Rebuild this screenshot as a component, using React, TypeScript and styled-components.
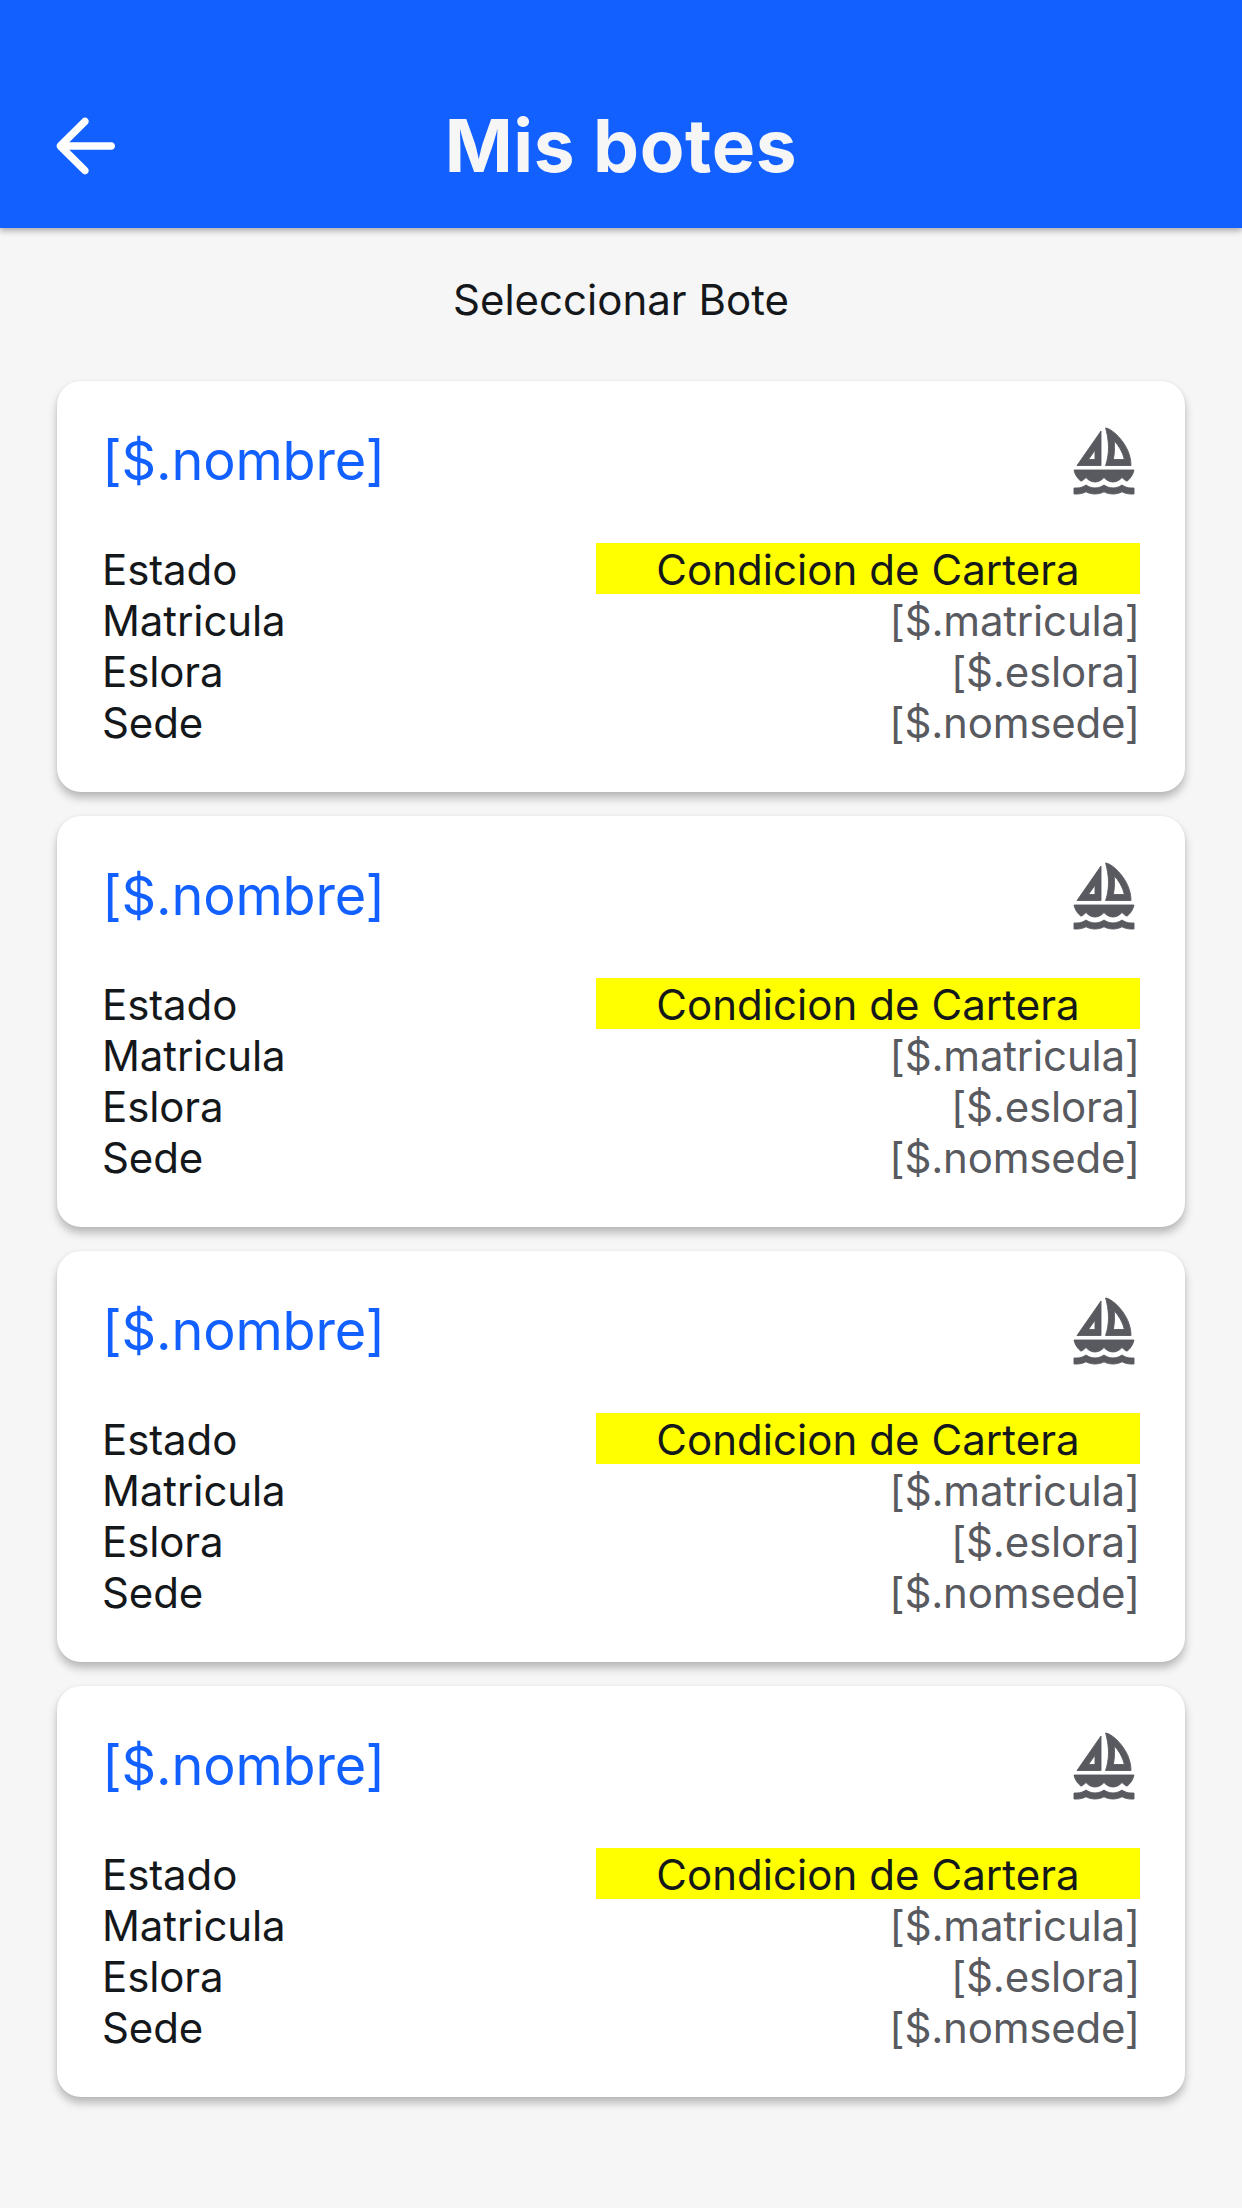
import React from "react";
import styled, { createGlobalStyle } from "styled-components";
import { MdOutlineSailing } from "react-icons/md";

const Global = createGlobalStyle`
  html, body { margin: 0; padding: 0; background: #f6f6f6; }
  body { width: 1242px; min-height: 2208px; font-family: "Inter", "Liberation Sans", sans-serif; }
`;

const Page = styled.div`
  width: 1242px;
  height: 2208px;
  background: #f6f6f6;
  display: flex;
  flex-direction: column;
  overflow: hidden;
`;

const Header = styled.header`
  height: 228px;
  box-sizing: border-box;
  padding: 99px 40px 39px;
  background: #1160ff;
  box-shadow: 0 3px 6px rgba(0, 0, 0, 0.3);
  display: grid;
  grid-template-columns: 1fr auto 1fr;
  align-items: center;
  position: relative;
  z-index: 1;
`;

const BackIcon = styled.svg`
  width: 90px;
  height: 90px;
  fill: #ffffff;
  display: block;
`;

const Title = styled.h1`
  margin: 0;
  font-size: 73px;
  font-weight: 700;
  letter-spacing: 0.6px;
  line-height: 94px;
  color: #f6f6f6;
`;

const Subtitle = styled.p`
  margin: 0;
  padding-top: 46px;
  height: 153px;
  box-sizing: border-box;
  text-align: center;
  font-size: 42px;
  line-height: 51px;
  color: #14181b;
`;

const List = styled.div`
  display: flex;
  flex-direction: column;
  gap: 24px;
  padding: 0 57px;
`;

const Card = styled.article`
  height: 411px;
  box-sizing: border-box;
  padding: 35px 45px 45px;
  background: #ffffff;
  border-radius: 24px;
  box-shadow: 0 6px 9px rgba(0, 0, 0, 0.25), 0 0 3px rgba(0, 0, 0, 0.06);
  display: flex;
  flex-direction: column;
`;

const CardHead = styled.div`
  height: 127px;
  display: flex;
  justify-content: space-between;
  align-items: flex-start;
`;

const Name = styled.h2`
  margin: 0;
  font-size: 54px;
  font-weight: 400;
  letter-spacing: -0.15px;
  line-height: 90px;
  color: #1160ff;
`;

const BoatIcon = styled(MdOutlineSailing)`
  width: 72px;
  height: 72px;
  color: #585a60;
  margin: 9px 0 0 0;
  display: block;

  path {
    stroke: #585a60;
    stroke-width: 0.3;
  }

  path[fill="none"] {
    stroke: none;
  }
`;

const Row = styled.div`
  display: flex;
  justify-content: space-between;
  font-size: 42px;
  line-height: 53px;
  height: 51px;
`;

const Label = styled.span`
  color: #14181b;
  letter-spacing: -0.1px;
`;

const Value = styled.span`
  color: #585a60;
  width: 544px;
  letter-spacing: -0.2px;
  text-align: right;
`;

const Status = styled.span`
  width: 544px;
  height: 51px;
  background: #ffff00;
  color: #14181b;
  letter-spacing: 0.05px;
  text-align: center;
`;

const rows = [
  ["Matricula", "[$.matricula]"],
  ["Eslora", "[$.eslora]"],
  ["Sede", "[$.nomsede]"],
];

export default function App() {
  return (
    <Page>
      <Global />
      <Header>
        <BackIcon viewBox="0 0 24 24">
          <path d="M19 11H7.83l4.88-4.88c.39-.39.39-1.03 0-1.42-.39-.39-1.02-.39-1.41 0l-6.59 6.59c-.39.39-.39 1.02 0 1.41l6.59 6.59c.39.39 1.02.39 1.41 0 .39-.39.39-1.02 0-1.41L7.83 13H19c.55 0 1-.45 1-1s-.45-1-1-1z" />
        </BackIcon>
        <Title>Mis botes</Title>
      </Header>
      <Subtitle>Seleccionar Bote</Subtitle>
      <List>
        {[0, 1, 2, 3].map((i) => (
          <Card key={i}>
            <CardHead>
              <Name>[$.nombre]</Name>
              <BoatIcon />
            </CardHead>
            <Row>
              <Label>Estado</Label>
              <Status>Condicion de Cartera</Status>
            </Row>
            {rows.map(([label, value]) => (
              <Row key={label}>
                <Label>{label}</Label>
                <Value>{value}</Value>
              </Row>
            ))}
          </Card>
        ))}
      </List>
    </Page>
  );
}
